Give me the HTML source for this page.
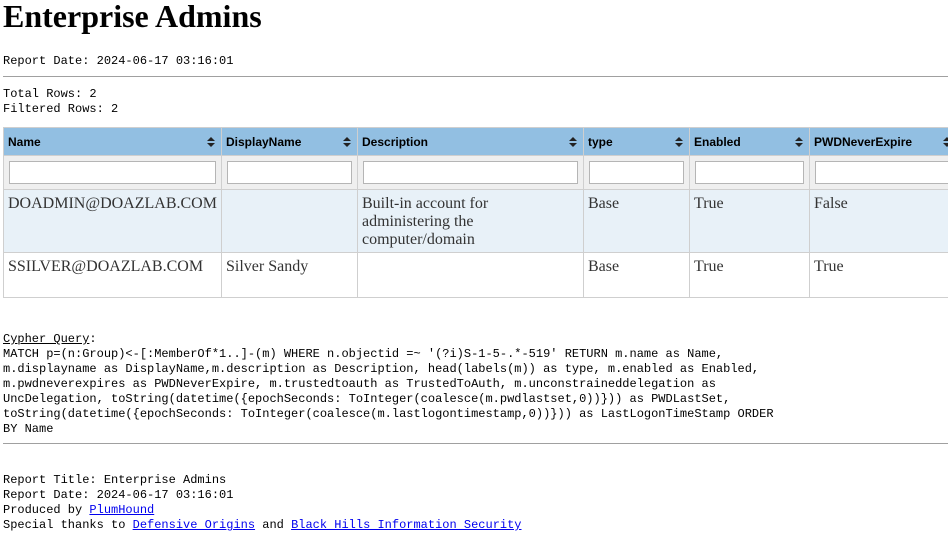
<!DOCTYPE html>
<html><head><meta charset="utf-8">
<style>
html,body{margin:0;padding:0;width:948px;height:536px;overflow:hidden;background:#fff;}
.m{position:absolute;left:3px;font-family:"Liberation Mono","DejaVu Sans Mono",monospace;font-size:12px;line-height:15px;color:#000;white-space:pre;}
h1{position:absolute;left:3px;top:-3px;margin:0;font-family:"Liberation Serif",serif;font-size:32px;font-weight:bold;line-height:38px;}
hr{position:absolute;left:3px;width:945px;margin:0;border:0;border-top:1px solid #a0a0a0;height:0;}
table{position:absolute;left:3px;top:127px;border-collapse:collapse;table-layout:fixed;width:1000px;}
td,th{border:1px solid #cfcfcf;padding:0;}
th{background:#92bfe2;font-family:"Liberation Sans",Arial,sans-serif;font-size:12px;font-weight:bold;text-align:left;height:27px;padding-left:4px;position:relative;color:#000;}
th svg{position:absolute;right:6px;top:9px;}
.f td{background:#efefef;height:33px;padding:0 5px;}
.f div{height:21px;border:1px solid #b5b5b5;background:#fff;}
.r td{font-family:"Liberation Serif",serif;font-size:16px;line-height:18px;color:#333;vertical-align:top;padding:5px 4px 0 4px;}
.r1 td{background:#e8f1f8;height:57px;}
.r2 td{background:#fff;height:39px;}
a{color:#0000ee;}
</style></head><body>
<h1>Enterprise Admins</h1>
<div class="m" style="top:54px">Report Date: 2024-06-17 03:16:01</div>
<hr style="top:76px">
<div class="m" style="top:87px">Total Rows: 2
Filtered Rows: 2</div>
<table>
<colgroup><col style="width:218px"><col style="width:136px"><col style="width:226px"><col style="width:106px"><col style="width:120px"><col style="width:194px"></colgroup>
<tr>
<th>Name<svg width="8" height="10" viewBox="0 0 8 10"><path d="M0 4L4 0L8 4Z M0 6L4 10L8 6Z" fill="#222"/></svg></th>
<th>DisplayName<svg width="8" height="10" viewBox="0 0 8 10"><path d="M0 4L4 0L8 4Z M0 6L4 10L8 6Z" fill="#222"/></svg></th>
<th>Description<svg width="8" height="10" viewBox="0 0 8 10"><path d="M0 4L4 0L8 4Z M0 6L4 10L8 6Z" fill="#222"/></svg></th>
<th>type<svg width="8" height="10" viewBox="0 0 8 10"><path d="M0 4L4 0L8 4Z M0 6L4 10L8 6Z" fill="#222"/></svg></th>
<th>Enabled<svg width="8" height="10" viewBox="0 0 8 10"><path d="M0 4L4 0L8 4Z M0 6L4 10L8 6Z" fill="#222"/></svg></th>
<th>PWDNeverExpire<svg width="8" height="10" viewBox="0 0 8 10" style="right:52px"><path d="M0 4L4 0L8 4Z M0 6L4 10L8 6Z" fill="#222"/></svg></th>
</tr>
<tr class="f"><td><div></div></td><td><div></div></td><td><div></div></td><td><div></div></td><td><div></div></td><td><div></div></td></tr>
<tr class="r r1"><td>DOADMIN@DOAZLAB.COM</td><td></td><td>Built-in account for administering the computer/domain</td><td>Base</td><td>True</td><td>False</td></tr>
<tr class="r r2"><td>SSILVER@DOAZLAB.COM</td><td>Silver Sandy</td><td></td><td>Base</td><td>True</td><td>True</td></tr>
</table>
<div class="m" style="top:332px"><u>Cypher Query</u>:
MATCH p=(n:Group)&lt;-[:MemberOf*1..]-(m) WHERE n.objectid =~ '(?i)S-1-5-.*-519' RETURN m.name as Name,
m.displayname as DisplayName,m.description as Description, head(labels(m)) as type, m.enabled as Enabled,
m.pwdneverexpires as PWDNeverExpire, m.trustedtoauth as TrustedToAuth, m.unconstraineddelegation as
UncDelegation, toString(datetime({epochSeconds: ToInteger(coalesce(m.pwdlastset,0))})) as PWDLastSet,
toString(datetime({epochSeconds: ToInteger(coalesce(m.lastlogontimestamp,0))})) as LastLogonTimeStamp ORDER
BY Name</div>
<hr style="top:443px">
<div class="m" style="top:473px">Report Title: Enterprise Admins
Report Date: 2024-06-17 03:16:01
Produced by <a href="#">PlumHound</a>
Special thanks to <a href="#">Defensive Origins</a> and <a href="#">Black Hills Information Security</a></div>
</body></html>
